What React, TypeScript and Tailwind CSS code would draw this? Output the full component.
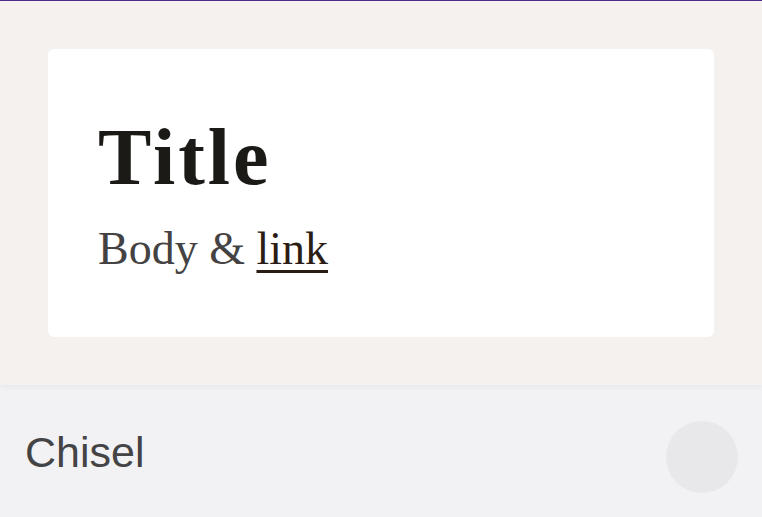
export default function App() {
  return (
    <div className="min-h-screen bg-[#f2f2f4] overflow-hidden">
      {/* Preview area */}
      <div className="relative z-10 border-t border-[#4f2a8a] bg-[#f5f1ee] p-[48px] shadow-[0_2px_6px_rgba(0,0,0,0.05)]">
        <div className="rounded-[6px] bg-white px-[50px] pt-[60px] pb-[54px]">
          <h1
            className="text-[80px] font-bold leading-[1.2] tracking-[3px] text-[#1c1a17]"
            style={{ fontFamily: '"Liberation Serif", serif' }}
          >
            Title
          </h1>
          <p
            className="mt-[9px] text-[46px] leading-[1.5] text-[#444242]"
            style={{ fontFamily: '"Liberation Serif", serif' }}
          >
            Body &amp;{" "}
            <a href="#" className="text-[#2b1d14] underline decoration-[3px] underline-offset-[6px]">
              link
            </a>
          </p>
        </div>
      </div>
      {/* Footer bar */}
      <div className="flex h-[144px] items-center justify-between pl-[25px] pr-[24px]">
        <span className="mb-[10px] text-[43px] text-[#444446]" style={{ fontFamily: '"Liberation Sans", Arial, sans-serif' }}>
          Chisel
        </span>
        <div className="h-[72px] w-[72px] rounded-full bg-[#e8e8ea]" />
      </div>
    </div>
  );
}
